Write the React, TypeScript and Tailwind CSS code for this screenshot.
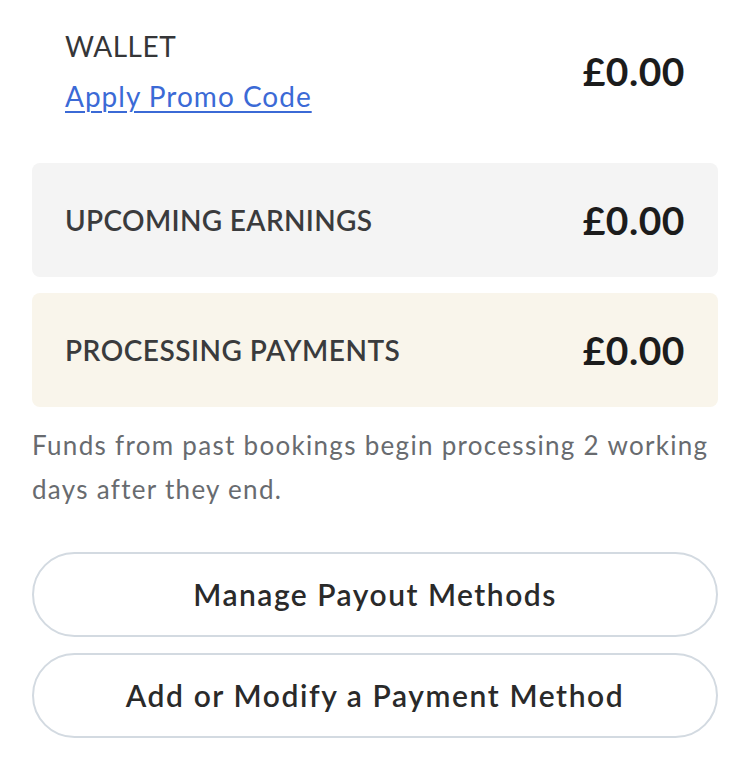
export default function App() {
  return (
    <div className="min-h-screen bg-white px-8 pt-[29px] font-['Lato',sans-serif] text-[#222]">
      {/* Wallet */}
      <div className="flex items-center justify-between px-[33px]">
        <div className="flex flex-col gap-4">
          <span className="text-[28px] leading-[34px] tracking-[0.5px] text-[#353638]">WALLET</span>
          <a href="#" className="text-[28px] leading-[34px] tracking-[1px] text-[#3b6ad6] underline underline-offset-[4px] decoration-2">
            Apply Promo Code
          </a>
        </div>
        <span className="text-[39px] leading-[48px] font-bold tracking-[0.5px] text-[#1c1c1c]">£0.00</span>
      </div>

      {/* Balances */}
      <div className="mt-[50px] flex flex-col gap-4">
        <div className="flex h-[114px] items-center justify-between rounded-lg bg-[#f4f4f4] px-[33px]">
          <span className="text-[28px] font-semibold tracking-[0.35px] text-[#3a3b3d]">UPCOMING EARNINGS</span>
          <span className="text-[39px] font-bold tracking-[0.5px] text-[#1c1c1c]">£0.00</span>
        </div>
        <div className="flex h-[114px] items-center justify-between rounded-lg bg-[#f9f5eb] px-[33px]">
          <span className="text-[28px] font-semibold tracking-[0.5px] text-[#3a3b3d]">PROCESSING PAYMENTS</span>
          <span className="text-[39px] font-bold tracking-[0.5px] text-[#1c1c1c]">£0.00</span>
        </div>
      </div>

      <p className="mt-[16px] text-[26px] leading-[44px] tracking-[1.3px] text-[#686b6f]">
        Funds from past bookings begin processing 2 working days after they end.
      </p>

      {/* Actions */}
      <div className="mt-[41px] flex flex-col gap-4">
        <button className="h-[85px] w-full rounded-full border-2 border-[#d3dae1] text-[30px] font-semibold tracking-[1.5px] text-[#2a2a2a]">
          Manage Payout Methods
        </button>
        <button className="h-[85px] w-full rounded-full border-2 border-[#d3dae1] text-[30px] font-semibold tracking-[1.6px] text-[#2a2a2a]">
          Add or Modify a Payment Method
        </button>
      </div>
    </div>
  );
}
